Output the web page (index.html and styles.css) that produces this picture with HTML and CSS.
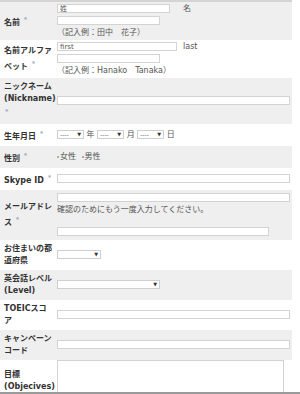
FILE: index.html
```html
<!doctype html>
<html>
  <head>
    <meta charset="utf-8">
    <title>お申し込みフォーム</title>
    <link rel="stylesheet" href="styles.css">
  </head>
  <body>
    <table class="form">
      <colgroup><col class="col-label"><col></colgroup>
      <tr class="odd">
        <th>名前 <span class="req">*</span></th>
        <td class="tight">
          <span class="part"><input type="text" class="field w113" placeholder="姓"></span>名<br>
          <input type="text" class="field w103"><br>
          <span class="note">（記入例：田中　花子）</span>
        </td>
      </tr>
      <tr>
        <th>名前アルファ<wbr>ベット <span class="req">*</span></th>
        <td class="tight">
          <span class="part"><input type="text" class="field w120" placeholder="first"></span>last<br>
          <input type="text" class="field w103"><br>
          <span class="note">（記入例：Hanako　Tanaka）</span>
        </td>
      </tr>
      <tr class="odd">
        <th>ニックネーム (Nickname) <span class="req">*</span></th>
        <td><input type="text" class="field full"></td>
      </tr>
      <tr>
        <th>生年月日 <span class="req">*</span></th>
        <td>
          <span class="sel w27"><select><option>----</option></select></span> 年
          <span class="sel w27"><select><option>----</option></select></span> 月
          <span class="sel w27"><select><option>----</option></select></span> 日
        </td>
      </tr>
      <tr class="odd">
        <th>性別 <span class="req">*</span></th>
        <td>
          <label class="radio"><input type="radio" name="sex">女性</label>
          <label class="radio"><input type="radio" name="sex">男性</label>
        </td>
      </tr>
      <tr>
        <th>Skype ID <span class="req">*</span></th>
        <td><input type="text" class="field full"></td>
      </tr>
      <tr class="odd">
        <th>メールアドレ<wbr>ス <span class="req">*</span></th>
        <td class="mail">
          <input type="text" class="field full">
          <div class="note">確認のためにもう一度入力してください。</div>
          <input type="text" class="field w212">
        </td>
      </tr>
      <tr>
        <th>お住まいの都道府県</th>
        <td><span class="sel w44"><select><option></option></select></span></td>
      </tr>
      <tr class="odd">
        <th>英会話レベル (Level)</th>
        <td><span class="sel w103"><select><option></option></select></span></td>
      </tr>
      <tr>
        <th>TOEICスコア</th>
        <td><input type="text" class="field full"></td>
      </tr>
      <tr class="odd">
        <th>キャンペーンコード</th>
        <td><input type="text" class="field full"></td>
      </tr>
      <tr>
        <th>目標 (Objecives)</th>
        <td class="top"><textarea class="goal"></textarea></td>
      </tr>
    </table>
  </body>
</html>
```

FILE: styles.css
```css
body {
  margin: 0;
  font-family: "DejaVu Sans", "Noto Sans CJK JP", sans-serif;
  font-size: 8px;
  color: #333;
}
body::after {
  content: "";
  position: fixed;
  left: 0;
  right: 0;
  bottom: 0;
  height: 2px;
  background: #9a9a9a;
}
table.form {
  width: 292px;
  border-collapse: collapse;
  table-layout: fixed;
  border-top: 2px solid #d4d4d4;
}
.col-label {
  width: 57px;
}
tr.odd {
  background: #efefef;
}
th {
  text-align: left;
  font-weight: bold;
  line-height: 12px;
  padding: 3px 3px 3px 4px;
  vertical-align: middle;
  color: #333;
}
td {
  line-height: 12px;
  padding: 3px 0;
  vertical-align: middle;
  color: #555;
}
td.tight {
  padding: 1px 0;
}
td.mail {
  padding: 2px 0;
}
td.top {
  padding: 0;
  vertical-align: top;
}
.req {
  font-size: 7px;
  font-weight: normal;
  line-height: 14px;
  color: #8797ad;
  vertical-align: 3px;
  margin-left: 1px;
}
.note {
  color: #555;
}
td.mail .note {
  margin-bottom: 10px;
}
.part {
  display: inline-block;
  width: 126px;
}
input.field {
  box-sizing: border-box;
  height: 9px;
  margin: 0;
  padding: 0 2px;
  border: 1px solid #d3d3d3;
  background: #fff;
  font-family: inherit;
  font-size: 7px;
  vertical-align: middle;
}
input.field::placeholder {
  color: #555;
}
.full { width: 233px; }
.w113 { width: 113px; }
.w120 { width: 120px; }
.w103 { width: 103px; }
.w212 { width: 212px; }
.w27 { width: 27px; }
.w44 { width: 44px; }
.sel {
  position: relative;
  display: inline-block;
  vertical-align: middle;
  line-height: 0;
}
.sel select {
  -webkit-appearance: none;
  appearance: none;
  box-sizing: border-box;
  width: 100%;
  height: 9px;
  margin: 0;
  padding: 0 0 0 2px;
  border: 1px solid #cfcfcf;
  border-radius: 0;
  background: #fff;
  color: #555;
  font-family: inherit;
  font-size: 6px;
}
.sel::after {
  content: "▼";
  position: absolute;
  right: 3px;
  top: 2px;
  font-size: 5px;
  line-height: 5px;
  color: #333;
}
.radio {
  margin-right: 3px;
}
.radio input {
  -webkit-appearance: none;
  appearance: none;
  width: 2px;
  height: 2px;
  margin: 0 1px 0 0;
  border-radius: 50%;
  background: #999;
  vertical-align: middle;
}
textarea.goal {
  display: block;
  box-sizing: border-box;
  width: 227px;
  height: 42px;
  margin: 0;
  border: 1px solid #d3d3d3;
  background: #fff;
  resize: none;
}
```
